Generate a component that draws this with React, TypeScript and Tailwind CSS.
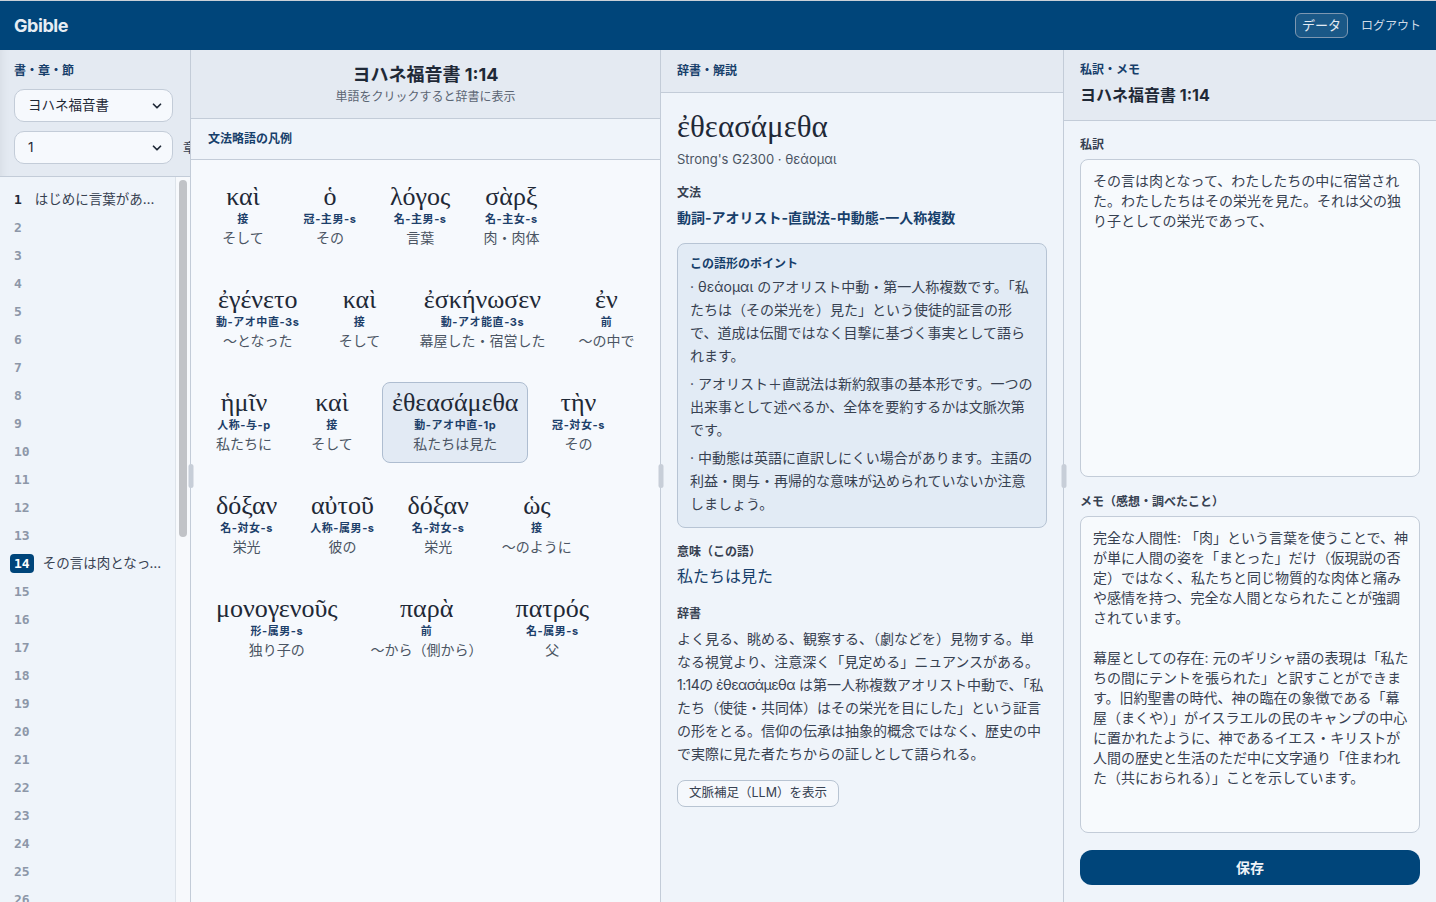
import { ChevronDown } from 'lucide-react'

const SANS = "font-['Inter','Noto_Sans_CJK_JP',sans-serif]"
const GREEK = "font-['Liberation_Serif','DejaVu_Serif',serif]"

type Word = { g: string; pos: string; gloss: string; sel?: boolean }

const ROWS: Word[][] = [
  [
    { g: 'καὶ', pos: '接', gloss: 'そして' },
    { g: 'ὁ', pos: '冠-主男-s', gloss: 'その' },
    { g: 'λόγος', pos: '名-主男-s', gloss: '言葉' },
    { g: 'σὰρξ', pos: '名-主女-s', gloss: '肉・肉体' },
  ],
  [
    { g: 'ἐγένετο', pos: '動-アオ中直-3s', gloss: '〜となった' },
    { g: 'καὶ', pos: '接', gloss: 'そして' },
    { g: 'ἐσκήνωσεν', pos: '動-アオ能直-3s', gloss: '幕屋した・宿営した' },
    { g: 'ἐν', pos: '前', gloss: '〜の中で' },
  ],
  [
    { g: 'ἡμῖν', pos: '人称-与-p', gloss: '私たちに' },
    { g: 'καὶ', pos: '接', gloss: 'そして' },
    { g: 'ἐθεασάμεθα', pos: '動-アオ中直-1p', gloss: '私たちは見た', sel: true },
    { g: 'τὴν', pos: '冠-対女-s', gloss: 'その' },
  ],
  [
    { g: 'δόξαν', pos: '名-対女-s', gloss: '栄光' },
    { g: 'αὐτοῦ', pos: '人称-属男-s', gloss: '彼の' },
    { g: 'δόξαν', pos: '名-対女-s', gloss: '栄光' },
    { g: 'ὡς', pos: '接', gloss: '〜のように' },
  ],
  [
    { g: 'μονογενοῦς', pos: '形-属男-s', gloss: '独り子の' },
    { g: 'παρὰ', pos: '前', gloss: '〜から（側から）' },
    { g: 'πατρός', pos: '名-属男-s', gloss: '父' },
  ],
]

const VERSES: Record<number, string> = {
  1: 'はじめに言葉があった。',
  14: 'その言は肉となって、わたしたちの中に宿営された。',
}

const MEMO = `完全な人間性: 「肉」という言葉を使うことで、神が単に人間の姿を「まとった」だけ（仮現説の否定）ではなく、私たちと同じ物質的な肉体と痛みや感情を持つ、完全な人間となられたことが強調されています。

幕屋としての存在: 元のギリシャ語の表現は「私たちの間にテントを張られた」と訳すことができます。旧約聖書の時代、神の臨在の象徴である「幕屋（まくや）」がイスラエルの民のキャンプの中心に置かれたように、神であるイエス・キリストが人間の歴史と生活のただ中に文字通り「住まわれた（共におられる）」ことを示しています。`

function Splitter() {
  return (
    <div className="relative w-px shrink-0 bg-[#c3ccd8]">
      <div className="absolute left-1/2 top-1/2 h-6 w-[5px] -translate-x-1/2 -translate-y-1/2 rounded-sm bg-[#c7ced8]" />
    </div>
  )
}

function FakeSelect({ value }: { value: string }) {
  return (
    <div className="flex h-[33px] w-[159px] shrink-0 items-center justify-between rounded-[10px] border border-[#c3ccd8] bg-[#f6f9fd] pl-[13px] pr-2 text-[13.5px] text-[#1f2937]">
      <span>{value}</span>
      <ChevronDown size={14} strokeWidth={3} className="text-[#1f2937]" />
    </div>
  )
}

function WordCard({ w }: { w: Word }) {
  return (
    <button
      type="button"
      className={`flex min-w-[74px] flex-col items-center rounded-lg border px-[9px] pt-[5px] pb-[7px] ${
        w.sel ? 'border-[#aebdd0] bg-[#e2eaf4]' : 'border-transparent'
      }`}
    >
      <span className={`${GREEK} text-[26px] leading-[30px] text-[#1f2937]`}>{w.g}</span>
      <span className="text-[11px] font-bold leading-[14px] tracking-[0.05em] text-[#1d3f6a]">{w.pos}</span>
      <span className="mt-[1px] text-[14px] leading-[22px] text-[#4b5563]">{w.gloss}</span>
    </button>
  )
}

export default function App() {
  const verses = Array.from({ length: 26 }, (_, i) => i + 1)

  return (
    <div className={`${SANS} flex h-[902px] w-[1436px] flex-col overflow-hidden bg-[#eff4fa] text-[#1f2937]`}>
      {/* top bar */}
      <header className="flex h-[50px] shrink-0 items-center justify-between border-t border-[#c9d0d8] bg-[#00457a] pl-[14px] pr-[15px]">
        <span className="text-[18px] font-bold tracking-tight text-[#e6ecf3]">Gbible</span>
        <div className="flex items-center gap-[13px]">
          <button type="button" className="rounded-md border border-[#7d97b1] bg-white/10 px-[6px] py-[2px] text-[13px] text-[#e3eaf2]">
            データ
          </button>
          <button type="button" className="text-[12px] text-[#cfdae6]">ログアウト</button>
        </div>
      </header>

      <div className="flex min-h-0 flex-1">
        {/* book / chapter / verse sidebar */}
        <aside className="flex w-[190px] shrink-0 flex-col overflow-hidden bg-[#e4eaf2] shadow-[inset_10px_0_10px_-8px_rgba(0,0,0,0.06)]">
          <div className="shrink-0 border-b border-[#c3ccd8] px-[14px] pt-[13px] pb-3">
            <div className="text-[12px] font-bold leading-4 text-[#173f6b]">書・章・節</div>
            <div className="mt-[10px]"><FakeSelect value="ヨハネ福音書" /></div>
            <div className="mt-[9px] flex items-center gap-2.5 whitespace-nowrap">
              <FakeSelect value="1" />
              <span className="text-[13px] text-[#374151]">章</span>
            </div>
          </div>
          <div className="flex min-h-0 flex-1">
            <ul className="flex-1 overflow-hidden bg-[#eff4fa] pt-2 pl-[10px] pr-[10px]">
              {verses.map((n) => {
                const active = n === 14
                const text = VERSES[n]
                return (
                  <li key={n} className="flex h-7 items-center gap-[9px]">
                    <span
                      className={`font-['DejaVu_Sans_Mono',monospace] rounded px-1 text-[13px] font-bold leading-[19px] ${
                        active ? 'bg-[#00457a] text-white' : text ? 'text-[#1f2937]' : 'text-[#8d97a8]'
                      }`}
                    >
                      {n}
                    </span>
                    {text && <span className="min-w-0 flex-1 truncate text-[13.5px] text-[#374151]">{text}</span>}
                  </li>
                )
              })}
            </ul>
            <div className="w-[15px] shrink-0 border-l border-[#dde3ea] bg-[#f7f9fc] px-[3px] pt-[3px]">
              <div className="h-[357px] rounded-full bg-[#c1c3c7]" />
            </div>
          </div>
        </aside>

        <Splitter />

        {/* verse words */}
        <section className="flex w-[469px] shrink-0 flex-col bg-[#f6f9fd]">
          <div className="h-[69px] shrink-0 border-b border-[#c3ccd8] bg-[#e4eaf2] pt-3 text-center">
            <h1 className="text-[18px] font-bold leading-[26px] text-[#1f2937]">ヨハネ福音書 1:14</h1>
            <p className="mt-px text-[12px] leading-4 text-[#5b6573]">単語をクリックすると辞書に表示</p>
          </div>
          <div className="flex h-[41px] shrink-0 items-center border-b border-[#c3ccd8] bg-[#eff4fa] px-[17px]">
            <span className="text-[12px] font-bold text-[#173f6b]">文法略語の凡例</span>
          </div>
          <div className="flex flex-col gap-y-[22px] pl-[15px] pr-2 pt-4">
            {ROWS.map((row, i) => (
              <div key={i} className="flex flex-wrap gap-x-[13px]">
                {row.map((w, j) => (
                  <WordCard key={j} w={w} />
                ))}
              </div>
            ))}
          </div>
        </section>

        <Splitter />

        {/* dictionary */}
        <section className="flex w-[402px] shrink-0 flex-col bg-[#eff4fa]">
          <div className="flex h-[43px] shrink-0 items-center border-b border-[#c3ccd8] bg-[#e4eaf2] px-4">
            <span className="text-[12px] font-bold text-[#173f6b]">辞書・解説</span>
          </div>
          <div className="px-4 pt-4">
            <div className={`${GREEK} text-[31px] leading-9 text-[#1f2937]`}>ἐθεασάμεθα</div>
            <div className="mt-1 text-[13px] leading-5 text-[#4b5563]">Strong's G2300 · θεάομαι</div>
            <div className="mt-4 text-[12px] font-semibold leading-4 text-[#374151]">文法</div>
            <div className="mt-2 text-[14px] font-bold leading-[18px] text-[#173f6b]">動詞-アオリスト-直説法-中動態-一人称複数</div>

            <div className="mt-4 rounded-lg border border-[#b7c4d4] bg-[#e2ebf5] px-3 pt-3 pb-3">
              <div className="text-[12px] font-bold leading-4 text-[#173f6b]">この語形のポイント</div>
              <div className="mt-[3px] flex flex-col gap-[5px] text-[14px] leading-[23px] text-[#374151]">
                <p>· θεάομαι のアオリスト中動・第一人称複数です。「私たちは（その栄光を）見た」という使徒的証言の形で、道成は伝聞ではなく目撃に基づく事実として語られます。</p>
                <p>· アオリスト＋直説法は新約叙事の基本形です。一つの出来事として述べるか、全体を要約するかは文脈次第です。</p>
                <p>· 中動態は英語に直訳しにくい場合があります。主語の利益・関与・再帰的な意味が込められていないか注意しましょう。</p>
              </div>
            </div>

            <div className="mt-4 text-[12px] font-semibold leading-4 text-[#374151]">意味（この語）</div>
            <div className="mt-1 text-[16px] leading-6 text-[#173f6b]">私たちは見た</div>
            <div className="mt-[18px] text-[12px] font-semibold leading-4 text-[#374151]">辞書</div>
            <p className="mt-[5px] text-[14px] leading-[23px] text-[#374151]">
              よく見る、眺める、観察する、（劇などを）見物する。単なる視覚より、注意深く「見定める」ニュアンスがある。<span className="tracking-[-0.04em]">1:14の ἐθεασάμεθα</span> は第一人称複数アオリスト中動で、「私たち（使徒・共同体）はその栄光を目にした」という証言の形をとる。信仰の伝承は抽象的概念ではなく、歴史の中で実際に見た者たちからの証しとして語られる。
            </p>
            <button
              type="button"
              className="mt-[15px] h-[27px] rounded-lg border border-[#b8c4d2] bg-[#f5f8fc] px-[11px] text-[12.5px] text-[#374151]"
            >
              文脈補足（LLM）を表示
            </button>
          </div>
        </section>

        <Splitter />

        {/* translation & memo */}
        <section className="flex min-w-0 flex-1 flex-col bg-[#eff4fa]">
          <div className="h-[71px] shrink-0 border-b border-[#c3ccd8] bg-[#e4eaf2] px-4 pt-3">
            <div className="text-[12px] font-bold leading-4 text-[#173f6b]">私訳・メモ</div>
            <div className="mt-[5px] text-[16px] font-bold leading-6 text-[#1f2937]">ヨハネ福音書 1:14</div>
          </div>
          <div className="flex flex-1 flex-col px-4 pt-4">
            <label className="text-[12px] font-semibold leading-4 text-[#374151]">私訳</label>
            <textarea
              defaultValue="その言は肉となって、わたしたちの中に宿営された。わたしたちはその栄光を見た。それは父の独り子としての栄光であって、"
              className="mt-[6px] h-[318px] resize-none rounded-lg border border-[#c3ccd8] bg-[#f7fafd] pl-3 pr-[6px] py-[11px] text-[14px] leading-5 text-[#374151] outline-none"
            />
            <label className="mt-[17px] text-[12px] font-semibold leading-4 text-[#374151]">メモ（感想・調べたこと）</label>
            <textarea
              defaultValue={MEMO}
              className="mt-[6px] h-[317px] resize-none overflow-hidden rounded-lg border border-[#c3ccd8] bg-[#f7fafd] pl-3 pr-[6px] py-[11px] text-[14px] leading-5 text-[#374151] outline-none"
            />
            <button
              type="button"
              className="mt-[17px] h-[35px] rounded-xl bg-[#00457a] text-[14px] font-bold text-[#eef3f8]"
            >
              保存
            </button>
          </div>
        </section>
      </div>
    </div>
  )
}
